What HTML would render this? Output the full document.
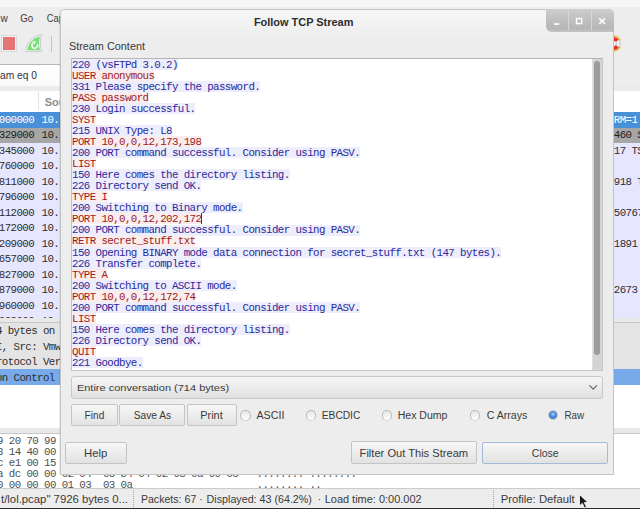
<!DOCTYPE html>
<html><head><meta charset="utf-8"><style>
html,body{margin:0;padding:0;width:640px;height:509px;overflow:hidden;position:relative;background:#ededed}
.mono{position:absolute;font-family:"Liberation Mono",monospace;font-size:10.8px;letter-spacing:-0.600px;line-height:11px;white-space:pre}
</style></head><body>
<div style="position:absolute;left:0;top:0;width:640px;height:7px;background:#f6f6f6"></div>
<div style="position:absolute;left:0;top:7px;width:640px;height:57px;background:#ededed"></div>
<div style="position:absolute;left:1px;top:35px;width:14px;height:15px;border:1px solid #dadada;background:#f2f2f2"></div>
<div style="position:absolute;left:3px;top:37px;width:12px;height:12.5px;background:#e57575"></div>
<svg style="position:absolute;left:22px;top:30px" width="24" height="26" viewBox="0 0 24 26"><path d="M3.6 21.6 C4.4 13.5 9.5 5.8 19.6 4.4 C17.8 10 18 16.5 19.6 21.6 Z" fill="#f0f0f0" stroke="#cdcdcd" stroke-width="1"/><path d="M5.4 20.3 C6.3 13.8 10.6 7.8 18 6.4 C16.6 11 16.6 16 18 20.3 Z" fill="#78de78"/><path d="M11.2 13.2 A2.8 2.8 0 1 0 15.2 14.2" fill="none" stroke="#f6fff6" stroke-width="1.5"/><path d="M10.2 11.2 L13.8 11 L12.6 14.6 Z" fill="#f6fff6"/></svg>
<div style="position:absolute;left:51px;top:36px;width:1px;height:16px;background:#c4c4c4"></div>
<div style="position:absolute;left:-5px;top:64px;width:610px;height:21px;border-top:1px solid #b8b8b8;border-bottom:1px solid #c8c8c8;background:linear-gradient(#fff,#fafafa)"></div>
<div style="position:absolute;left:0;top:86px;width:640px;height:5px;background:#ebebeb"></div>
<div style="position:absolute;left:0;top:91px;width:640px;height:21px;background:#fff"></div>
<div style="position:absolute;left:38px;top:92px;width:1px;height:18px;background:#e4e4e4"></div>
<div style="position:absolute;left:0;top:112.00px;width:640px;height:16.00px;background:#4a90d9"></div>
<div style="position:absolute;left:0;top:127.50px;width:640px;height:16.00px;background:#a6a6a6"></div>
<div style="position:absolute;left:0;top:143.00px;width:640px;height:16.00px;background:#e7e6ff"></div>
<div style="position:absolute;left:0;top:158.50px;width:640px;height:16.00px;background:#e7e6ff"></div>
<div style="position:absolute;left:0;top:174.00px;width:640px;height:16.00px;background:#e7e6ff"></div>
<div style="position:absolute;left:0;top:189.50px;width:640px;height:16.00px;background:#e7e6ff"></div>
<div style="position:absolute;left:0;top:205.00px;width:640px;height:16.00px;background:#e7e6ff"></div>
<div style="position:absolute;left:0;top:220.50px;width:640px;height:16.00px;background:#e7e6ff"></div>
<div style="position:absolute;left:0;top:236.00px;width:640px;height:16.00px;background:#e7e6ff"></div>
<div style="position:absolute;left:0;top:251.50px;width:640px;height:16.00px;background:#e7e6ff"></div>
<div style="position:absolute;left:0;top:267.00px;width:640px;height:16.00px;background:#e7e6ff"></div>
<div style="position:absolute;left:0;top:282.50px;width:640px;height:16.00px;background:#e7e6ff"></div>
<div style="position:absolute;left:0;top:298.00px;width:640px;height:16.00px;background:#e7e6ff"></div>
<div style="position:absolute;left:0;top:313.50px;width:640px;height:16.00px;background:#e7e6ff"></div>
<div style="position:absolute;left:0;top:318px;width:640px;height:4px;background:#e8e8e8;border-bottom:1px solid #c8c8c8"></div>
<div style="position:absolute;left:0;top:323px;width:640px;height:106px;background:#fff"></div>
<div style="position:absolute;left:0;top:322.50px;width:640px;height:15.50px;background:#e4e4e4"></div>
<div style="position:absolute;left:0;top:338.00px;width:640px;height:15.50px;background:#e4e4e4"></div>
<div style="position:absolute;left:0;top:353.50px;width:640px;height:15.50px;background:#e4e4e4"></div>
<div style="position:absolute;left:0;top:369.00px;width:640px;height:15.50px;background:#78aaea"></div>
<div style="position:absolute;left:0;top:428px;width:640px;height:5px;background:#e8e8e8;border-bottom:1px solid #c8c8c8"></div>
<div style="position:absolute;left:0;top:434px;width:640px;height:55px;background:#fff"></div>
<div style="position:absolute;left:0;top:488px;width:640px;height:1px;background:#cbcbcb"></div>
<div style="position:absolute;left:0;top:489px;width:640px;height:20px;background:#ededed"></div>
<div style="position:absolute;left:133px;top:490px;width:0;height:19px;border-left:1px dotted #a8a8a8"></div>
<div style="position:absolute;left:493px;top:490px;width:0;height:19px;border-left:1px dotted #a8a8a8"></div>
<svg style="position:absolute;left:606px;top:34px" width="18" height="19" viewBox="0 0 18 19"><path d="M12.33 5.45 A6.3 6.3 0 0 1 12.33 13.55 L9.95 11.56 A3.2 3.2 0 0 0 9.95 7.44 Z" fill="#f6f6f6" stroke="#a8a8a8" stroke-width="0.7"/><path d="M5.64 2.55 A7.2 7.2 0 0 1 14.03 6.46" fill="none" stroke="#e4c458" stroke-width="2.2"/><path d="M14.03 12.54 A7.2 7.2 0 0 1 5.64 16.45" fill="none" stroke="#e4c458" stroke-width="2.2"/><path d="M6.35 3.00 A6.6 6.6 0 0 1 12.70 5.44 L9.71 7.78 A2.8 2.8 0 0 0 7.01 6.74 Z" fill="#e43030"/><path d="M12.70 13.56 A6.6 6.6 0 0 1 6.35 16.00 L7.01 12.26 A2.8 2.8 0 0 0 9.71 11.22 Z" fill="#e43030"/></svg>
<div style="position:absolute;left:0;top:112px;width:640px;height:206.3px;overflow:hidden"><div class="mono" style="left:-1.2px;top:2.90px;color:#ffffff">000000</div>
<div class="mono" style="left:41.6px;top:2.90px;color:#ffffff">10.</div>
<div class="mono" style="left:613.8px;top:2.90px;color:#ffffff">RM=1</div>
<div class="mono" style="left:-1.2px;top:18.40px;color:#1e1e1e">329000</div>
<div class="mono" style="left:41.6px;top:18.40px;color:#1e1e1e">10.</div>
<div class="mono" style="left:613.8px;top:18.40px;color:#1e1e1e">460 S</div>
<div class="mono" style="left:-1.2px;top:33.90px;color:#2e2e2e">345000</div>
<div class="mono" style="left:41.6px;top:33.90px;color:#2e2e2e">10.</div>
<div class="mono" style="left:613.8px;top:33.90px;color:#2e2e2e">17 TS</div>
<div class="mono" style="left:-1.2px;top:49.40px;color:#2e2e2e">760000</div>
<div class="mono" style="left:41.6px;top:49.40px;color:#2e2e2e">10.</div>
<div class="mono" style="left:613.8px;top:49.40px;color:#2e2e2e"></div>
<div class="mono" style="left:-1.2px;top:64.90px;color:#2e2e2e">811000</div>
<div class="mono" style="left:41.6px;top:64.90px;color:#2e2e2e">10.</div>
<div class="mono" style="left:613.8px;top:64.90px;color:#2e2e2e">918 T</div>
<div class="mono" style="left:-1.2px;top:80.40px;color:#2e2e2e">796000</div>
<div class="mono" style="left:41.6px;top:80.40px;color:#2e2e2e">10.</div>
<div class="mono" style="left:613.8px;top:80.40px;color:#2e2e2e"></div>
<div class="mono" style="left:-1.2px;top:95.90px;color:#2e2e2e">112000</div>
<div class="mono" style="left:41.6px;top:95.90px;color:#2e2e2e">10.</div>
<div class="mono" style="left:613.8px;top:95.90px;color:#2e2e2e">50767</div>
<div class="mono" style="left:-1.2px;top:111.40px;color:#2e2e2e">172000</div>
<div class="mono" style="left:41.6px;top:111.40px;color:#2e2e2e">10.</div>
<div class="mono" style="left:613.8px;top:111.40px;color:#2e2e2e"></div>
<div class="mono" style="left:-1.2px;top:126.90px;color:#2e2e2e">209000</div>
<div class="mono" style="left:41.6px;top:126.90px;color:#2e2e2e">10.</div>
<div class="mono" style="left:613.8px;top:126.90px;color:#2e2e2e">1891</div>
<div class="mono" style="left:-1.2px;top:142.40px;color:#2e2e2e">657000</div>
<div class="mono" style="left:41.6px;top:142.40px;color:#2e2e2e">10.</div>
<div class="mono" style="left:613.8px;top:142.40px;color:#2e2e2e"></div>
<div class="mono" style="left:-1.2px;top:157.90px;color:#2e2e2e">827000</div>
<div class="mono" style="left:41.6px;top:157.90px;color:#2e2e2e">10.</div>
<div class="mono" style="left:613.8px;top:157.90px;color:#2e2e2e"></div>
<div class="mono" style="left:-1.2px;top:173.40px;color:#2e2e2e">879000</div>
<div class="mono" style="left:41.6px;top:173.40px;color:#2e2e2e">10.</div>
<div class="mono" style="left:613.8px;top:173.40px;color:#2e2e2e">2673</div>
<div class="mono" style="left:-1.2px;top:188.90px;color:#2e2e2e">960000</div>
<div class="mono" style="left:41.6px;top:188.90px;color:#2e2e2e">10.</div>
<div class="mono" style="left:613.8px;top:188.90px;color:#2e2e2e"></div>
<div class="mono" style="left:-1.2px;top:204.40px;color:#2e2e2e">038000</div>
<div class="mono" style="left:41.6px;top:204.40px;color:#2e2e2e">10.</div>
<div class="mono" style="left:613.8px;top:204.40px;color:#2e2e2e"></div></div>
<div style="position:absolute;left:0;top:322px;width:640px;height:106px;overflow:hidden"><div class="mono" style="left:-62.9px;top:4.00px;color:#2e2e2e">Frame 1: 74 bytes on wire</div>
<div class="mono" style="left:-62.9px;top:19.50px;color:#2e2e2e">Ethernet II, Src: Vmware</div>
<div class="mono" style="left:-62.9px;top:35.00px;color:#2e2e2e">Internet Protocol Version 4</div>
<div class="mono" style="left:-62.9px;top:50.50px;color:#2e2e2e">Transmission Control Protocol</div></div>
<div style="position:absolute;left:0;top:434px;width:640px;height:54px;overflow:hidden"><div class="mono" style="left:-8.84px;top:1.60px;color:#505050">09</div>
<div class="mono" style="left:8.80px;top:1.60px;color:#505050">20</div>
<div class="mono" style="left:26.44px;top:1.60px;color:#505050">70</div>
<div class="mono" style="left:44.08px;top:1.60px;color:#505050">99</div>
<div class="mono" style="left:61.72px;top:1.60px;color:#505050">00</div>
<div class="mono" style="left:79.36px;top:1.60px;color:#505050">50</div>
<div class="mono" style="left:102.90px;top:1.60px;color:#505050">56</div>
<div class="mono" style="left:120.54px;top:1.60px;color:#505050">c0</div>
<div class="mono" style="left:138.18px;top:1.60px;color:#505050">00</div>
<div class="mono" style="left:155.82px;top:1.60px;color:#505050">08</div>
<div class="mono" style="left:173.46px;top:1.60px;color:#505050">08</div>
<div class="mono" style="left:191.10px;top:1.60px;color:#505050">00</div>
<div class="mono" style="left:208.74px;top:1.60px;color:#505050">45</div>
<div class="mono" style="left:226.38px;top:1.60px;color:#505050">00</div>
<div class="mono" style="left:256.5px;top:1.60px;color:#505050">........ ........</div>
<div class="mono" style="left:-8.84px;top:12.60px;color:#505050">08</div>
<div class="mono" style="left:8.80px;top:12.60px;color:#505050">14</div>
<div class="mono" style="left:26.44px;top:12.60px;color:#505050">40</div>
<div class="mono" style="left:44.08px;top:12.60px;color:#505050">00</div>
<div class="mono" style="left:61.72px;top:12.60px;color:#505050">40</div>
<div class="mono" style="left:79.36px;top:12.60px;color:#505050">06</div>
<div class="mono" style="left:102.90px;top:12.60px;color:#505050">b5</div>
<div class="mono" style="left:120.54px;top:12.60px;color:#505050">3a</div>
<div class="mono" style="left:138.18px;top:12.60px;color:#505050">0a</div>
<div class="mono" style="left:155.82px;top:12.60px;color:#505050">00</div>
<div class="mono" style="left:173.46px;top:12.60px;color:#505050">00</div>
<div class="mono" style="left:191.10px;top:12.60px;color:#505050">0c</div>
<div class="mono" style="left:208.74px;top:12.60px;color:#505050">0a</div>
<div class="mono" style="left:226.38px;top:12.60px;color:#505050">00</div>
<div class="mono" style="left:256.5px;top:12.60px;color:#505050">........ ........</div>
<div class="mono" style="left:-8.84px;top:23.60px;color:#505050">0c</div>
<div class="mono" style="left:8.80px;top:23.60px;color:#505050">e1</div>
<div class="mono" style="left:26.44px;top:23.60px;color:#505050">00</div>
<div class="mono" style="left:44.08px;top:23.60px;color:#505050">15</div>
<div class="mono" style="left:61.72px;top:23.60px;color:#505050">d2</div>
<div class="mono" style="left:79.36px;top:23.60px;color:#505050">4a</div>
<div class="mono" style="left:102.90px;top:23.60px;color:#505050">9f</div>
<div class="mono" style="left:120.54px;top:23.60px;color:#505050">6b</div>
<div class="mono" style="left:138.18px;top:23.60px;color:#505050">00</div>
<div class="mono" style="left:155.82px;top:23.60px;color:#505050">00</div>
<div class="mono" style="left:173.46px;top:23.60px;color:#505050">00</div>
<div class="mono" style="left:191.10px;top:23.60px;color:#505050">00</div>
<div class="mono" style="left:208.74px;top:23.60px;color:#505050">a0</div>
<div class="mono" style="left:226.38px;top:23.60px;color:#505050">02</div>
<div class="mono" style="left:256.5px;top:23.60px;color:#505050">........ ........</div>
<div class="mono" style="left:-8.84px;top:34.60px;color:#505050">0a</div>
<div class="mono" style="left:8.80px;top:34.60px;color:#505050">dc</div>
<div class="mono" style="left:26.44px;top:34.60px;color:#505050">00</div>
<div class="mono" style="left:44.08px;top:34.60px;color:#505050">00</div>
<div class="mono" style="left:61.72px;top:34.60px;color:#505050">02</div>
<div class="mono" style="left:79.36px;top:34.60px;color:#505050">04</div>
<div class="mono" style="left:102.90px;top:34.60px;color:#505050">05</div>
<div class="mono" style="left:120.54px;top:34.60px;color:#505050">b4</div>
<div class="mono" style="left:138.18px;top:34.60px;color:#505050">04</div>
<div class="mono" style="left:155.82px;top:34.60px;color:#505050">02</div>
<div class="mono" style="left:173.46px;top:34.60px;color:#505050">08</div>
<div class="mono" style="left:191.10px;top:34.60px;color:#505050">0a</div>
<div class="mono" style="left:208.74px;top:34.60px;color:#505050">00</div>
<div class="mono" style="left:226.38px;top:34.60px;color:#505050">03</div>
<div class="mono" style="left:256.5px;top:34.60px;color:#505050">........ ........</div>
<div class="mono" style="left:-8.84px;top:45.60px;color:#505050">00</div>
<div class="mono" style="left:8.80px;top:45.60px;color:#505050">00</div>
<div class="mono" style="left:26.44px;top:45.60px;color:#505050">00</div>
<div class="mono" style="left:44.08px;top:45.60px;color:#505050">00</div>
<div class="mono" style="left:61.72px;top:45.60px;color:#505050">01</div>
<div class="mono" style="left:79.36px;top:45.60px;color:#505050">03</div>
<div class="mono" style="left:102.90px;top:45.60px;color:#505050">03</div>
<div class="mono" style="left:120.54px;top:45.60px;color:#505050">0a</div>
<div class="mono" style="left:256.5px;top:45.60px;color:#505050">........ ..</div></div>
<svg style="position:absolute;left:0;top:0" width="640" height="509" font-family="Liberation Sans, sans-serif"><text id="menu_w" x="0.50" y="21.80" font-size="10" font-weight="normal" fill="#3a3a3a" textLength="7.30" lengthAdjust="spacingAndGlyphs">w</text><text id="menu_go" x="20.30" y="21.80" font-size="10" font-weight="normal" fill="#3a3a3a" textLength="12.90" lengthAdjust="spacingAndGlyphs">Go</text><text id="menu_cap" x="46.80" y="21.80" font-size="10" font-weight="normal" fill="#3a3a3a" textLength="17.20" lengthAdjust="spacingAndGlyphs">Cap</text><text id="filter" x="0.00" y="79.20" font-size="10.2" font-weight="normal" fill="#333333" textLength="37.00" lengthAdjust="spacingAndGlyphs">am eq 0</text><text id="hdr_so" x="44.70" y="106.00" font-size="11" font-weight="bold" fill="#8c8c8c">Sou</text><text id="st1" x="1.00" y="502.70" font-size="10" font-weight="normal" fill="#3a3a3a" textLength="127.00" lengthAdjust="spacingAndGlyphs">t/lol.pcap" 7926 bytes 0...</text><text id="st2" x="140.90" y="502.70" font-size="10" font-weight="normal" fill="#3a3a3a" textLength="55.40" lengthAdjust="spacingAndGlyphs">Packets: 67</text><text id="st3" x="199.30" y="502.70" font-size="10" font-weight="normal" fill="#3a3a3a">·</text><text id="st4" x="206.60" y="502.70" font-size="10" font-weight="normal" fill="#3a3a3a" textLength="105.30" lengthAdjust="spacingAndGlyphs">Displayed: 43 (64.2%)</text><text id="st5" x="317.70" y="502.70" font-size="10" font-weight="normal" fill="#3a3a3a">·</text><text id="st6" x="324.70" y="502.70" font-size="10" font-weight="normal" fill="#3a3a3a" textLength="96.90" lengthAdjust="spacingAndGlyphs">Load time: 0:00.002</text><text id="st7" x="500.70" y="502.70" font-size="10" font-weight="normal" fill="#3a3a3a" textLength="73.90" lengthAdjust="spacingAndGlyphs">Profile: Default</text></svg>
<div style="position:absolute;left:60px;top:9px;width:552px;height:463.5px;border:1px solid #c4c4c4;border-radius:5px 5px 0 0;background:#ededed;box-shadow:-1px 0 0 rgba(0,0,0,0.07)"></div>
<div style="position:absolute;left:61px;top:10px;width:552px;height:30px;border-radius:4px 4px 0 0;background:linear-gradient(#f6f6f6,#ededed)"></div>
<div style="position:absolute;left:545.5px;top:9px;width:68px;height:22.5px;border-radius:0 5px 0 6px;background:linear-gradient(#cdcdcd,#b6b6b6 85%,#c4c4c4)"></div>
<div style="position:absolute;left:567.5px;top:10px;width:1px;height:20px;background:#d6d6d6"></div>
<div style="position:absolute;left:590.5px;top:10px;width:1px;height:20px;background:#d6d6d6"></div>
<svg style="position:absolute;left:545px;top:9px" width="70" height="24" viewBox="0 0 70 24"><rect x="9" y="14.2" width="5.2" height="1.7" fill="#fff"/><rect x="31.5" y="9.6" width="5.2" height="5" fill="none" stroke="#fff" stroke-width="1.4"/><path d="M54.2 9.4 L60 15 M60 9.4 L54.2 15" stroke="#fff" stroke-width="1.5"/></svg>
<div style="position:absolute;left:71px;top:58px;width:530px;height:311px;border:1px solid #b4b4b4;border-left-color:#c0c0c0;border-right-color:#c8c8c8;border-bottom-color:#c8c8c8;background:#fff"></div>
<div style="position:absolute;left:72px;top:59.0px;height:11px;width:105.84px;background:#ededfb"></div>
<div class="mono" style="left:72px;top:59.90px;color:#2a2a9c">220 (vsFTPd 3.0.2)</div>
<div style="position:absolute;left:72px;top:70.035px;height:11px;width:82.32px;background:#fbeded"></div>
<div class="mono" style="left:72px;top:70.94px;color:#9c1a1a">USER anonymous</div>
<div style="position:absolute;left:72px;top:81.07px;height:11px;width:188.16px;background:#ededfb"></div>
<div class="mono" style="left:72px;top:81.97px;color:#2a2a9c">331 Please specify the password.</div>
<div style="position:absolute;left:72px;top:92.105px;height:11px;width:76.44px;background:#fbeded"></div>
<div class="mono" style="left:72px;top:93.01px;color:#9c1a1a">PASS password</div>
<div style="position:absolute;left:72px;top:103.14px;height:11px;width:123.48px;background:#ededfb"></div>
<div class="mono" style="left:72px;top:104.04px;color:#2a2a9c">230 Login successful.</div>
<div style="position:absolute;left:72px;top:114.175px;height:11px;width:23.52px;background:#fbeded"></div>
<div class="mono" style="left:72px;top:115.08px;color:#9c1a1a">SYST</div>
<div style="position:absolute;left:72px;top:125.21000000000001px;height:11px;width:99.96px;background:#ededfb"></div>
<div class="mono" style="left:72px;top:126.11px;color:#2a2a9c">215 UNIX Type: L8</div>
<div style="position:absolute;left:72px;top:136.245px;height:11px;width:129.36px;background:#fbeded"></div>
<div class="mono" style="left:72px;top:137.15px;color:#9c1a1a">PORT 10,0,0,12,173,198</div>
<div style="position:absolute;left:72px;top:147.28px;height:11px;width:288.12px;background:#ededfb"></div>
<div class="mono" style="left:72px;top:148.18px;color:#2a2a9c">200 PORT command successful. Consider using PASV.</div>
<div style="position:absolute;left:72px;top:158.315px;height:11px;width:23.52px;background:#fbeded"></div>
<div class="mono" style="left:72px;top:159.22px;color:#9c1a1a">LIST</div>
<div style="position:absolute;left:72px;top:169.35px;height:11px;width:217.56px;background:#ededfb"></div>
<div class="mono" style="left:72px;top:170.25px;color:#2a2a9c">150 Here comes the directory listing.</div>
<div style="position:absolute;left:72px;top:180.385px;height:11px;width:129.36px;background:#ededfb"></div>
<div class="mono" style="left:72px;top:181.28px;color:#2a2a9c">226 Directory send OK.</div>
<div style="position:absolute;left:72px;top:191.42000000000002px;height:11px;width:35.28px;background:#fbeded"></div>
<div class="mono" style="left:72px;top:192.32px;color:#9c1a1a">TYPE I</div>
<div style="position:absolute;left:72px;top:202.455px;height:11px;width:170.52px;background:#ededfb"></div>
<div class="mono" style="left:72px;top:203.36px;color:#2a2a9c">200 Switching to Binary mode.</div>
<div style="position:absolute;left:72px;top:213.49px;height:11px;width:129.36px;background:#fbeded"></div>
<div class="mono" style="left:72px;top:214.39px;color:#9c1a1a">PORT 10,0,0,12,202,172</div>
<div style="position:absolute;left:72px;top:224.525px;height:11px;width:288.12px;background:#ededfb"></div>
<div class="mono" style="left:72px;top:225.43px;color:#2a2a9c">200 PORT command successful. Consider using PASV.</div>
<div style="position:absolute;left:72px;top:235.56px;height:11px;width:123.48px;background:#fbeded"></div>
<div class="mono" style="left:72px;top:236.46px;color:#9c1a1a">RETR secret_stuff.txt</div>
<div style="position:absolute;left:72px;top:246.595px;height:11px;width:429.24px;background:#ededfb"></div>
<div class="mono" style="left:72px;top:247.50px;color:#2a2a9c">150 Opening BINARY mode data connection for secret_stuff.txt (147 bytes).</div>
<div style="position:absolute;left:72px;top:257.63px;height:11px;width:129.36px;background:#ededfb"></div>
<div class="mono" style="left:72px;top:258.53px;color:#2a2a9c">226 Transfer complete.</div>
<div style="position:absolute;left:72px;top:268.66499999999996px;height:11px;width:35.28px;background:#fbeded"></div>
<div class="mono" style="left:72px;top:269.56px;color:#9c1a1a">TYPE A</div>
<div style="position:absolute;left:72px;top:279.7px;height:11px;width:164.64px;background:#ededfb"></div>
<div class="mono" style="left:72px;top:280.60px;color:#2a2a9c">200 Switching to ASCII mode.</div>
<div style="position:absolute;left:72px;top:290.735px;height:11px;width:123.48px;background:#fbeded"></div>
<div class="mono" style="left:72px;top:291.63px;color:#9c1a1a">PORT 10,0,0,12,172,74</div>
<div style="position:absolute;left:72px;top:301.77px;height:11px;width:288.12px;background:#ededfb"></div>
<div class="mono" style="left:72px;top:302.67px;color:#2a2a9c">200 PORT command successful. Consider using PASV.</div>
<div style="position:absolute;left:72px;top:312.805px;height:11px;width:23.52px;background:#fbeded"></div>
<div class="mono" style="left:72px;top:313.70px;color:#9c1a1a">LIST</div>
<div style="position:absolute;left:72px;top:323.84000000000003px;height:11px;width:217.56px;background:#ededfb"></div>
<div class="mono" style="left:72px;top:324.74px;color:#2a2a9c">150 Here comes the directory listing.</div>
<div style="position:absolute;left:72px;top:334.875px;height:11px;width:129.36px;background:#ededfb"></div>
<div class="mono" style="left:72px;top:335.77px;color:#2a2a9c">226 Directory send OK.</div>
<div style="position:absolute;left:72px;top:345.91px;height:11px;width:23.52px;background:#fbeded"></div>
<div class="mono" style="left:72px;top:346.81px;color:#9c1a1a">QUIT</div>
<div style="position:absolute;left:72px;top:356.945px;height:11px;width:70.56px;background:#ededfb"></div>
<div class="mono" style="left:72px;top:357.84px;color:#2a2a9c">221 Goodbye.</div>
<div style="position:absolute;left:201px;top:213.2px;width:1px;height:11px;background:#3a3a3a"></div>
<div style="position:absolute;left:592px;top:59px;width:9px;height:311px;background:#d4d4d4;border-left:1px solid #dedede"></div>
<div style="position:absolute;left:594px;top:61px;width:5.5px;height:294px;border-radius:3px;background:#9c9c9c"></div>
<div style="position:absolute;left:71px;top:376px;width:530px;height:21px;border:1px solid #c8c8c8;border-radius:3px;background:linear-gradient(#f6f6f6,#e0e0e0)"></div>
<svg style="position:absolute;left:586px;top:383px" width="14" height="9" viewBox="0 0 14 9"><path d="M3.5 2.4L7.2 6.1L10.9 2.4" fill="none" stroke="#6a6a6a" stroke-width="1.3"/></svg>
<div style="position:absolute;left:70.8px;top:404.1px;width:45.40px;height:20.40px;border:1px solid #c4c4c4;border-radius:2px;background:linear-gradient(#f7f7f7,#e2e2e2)"></div>
<div style="position:absolute;left:119.3px;top:404.1px;width:63.80px;height:20.40px;border:1px solid #c4c4c4;border-radius:2px;background:linear-gradient(#f7f7f7,#e2e2e2)"></div>
<div style="position:absolute;left:186.6px;top:404.1px;width:48.00px;height:20.40px;border:1px solid #c4c4c4;border-radius:2px;background:linear-gradient(#f7f7f7,#e2e2e2)"></div>
<div style="position:absolute;left:240.2px;top:410px;width:8.5px;height:8.5px;border-radius:50%;border:1px solid #bababa;border-bottom-color:#d4d4d4;background:linear-gradient(#e6e6e6,#fdfdfd)"></div>
<div style="position:absolute;left:305.7px;top:410px;width:8.5px;height:8.5px;border-radius:50%;border:1px solid #bababa;border-bottom-color:#d4d4d4;background:linear-gradient(#e6e6e6,#fdfdfd)"></div>
<div style="position:absolute;left:381.5px;top:410px;width:8.5px;height:8.5px;border-radius:50%;border:1px solid #bababa;border-bottom-color:#d4d4d4;background:linear-gradient(#e6e6e6,#fdfdfd)"></div>
<div style="position:absolute;left:469.5px;top:410px;width:8.5px;height:8.5px;border-radius:50%;border:1px solid #bababa;border-bottom-color:#d4d4d4;background:linear-gradient(#e6e6e6,#fdfdfd)"></div>
<div style="position:absolute;left:547.9px;top:410.2px;width:8px;height:8px;border-radius:50%;border:1px solid #c4c8cc;background:radial-gradient(circle at 50% 40%,#8cbcf0 0 1px,#4f8fdc 2.5px,#3d7fd0 4px)"></div>
<div style="position:absolute;left:65.25px;top:441.5px;width:60.00px;height:20.20px;border:1px solid #c4c4c4;border-radius:2px;background:linear-gradient(#f7f7f7,#e2e2e2)"></div>
<div style="position:absolute;left:350.8px;top:441.3px;width:124.00px;height:20.50px;border:1px solid #c4c4c4;border-radius:2px;background:linear-gradient(#f7f7f7,#e2e2e2)"></div>
<div style="position:absolute;left:481.9px;top:441.5px;width:124.50px;height:20.30px;border:1px solid #a4bcdc;border-radius:2px;background:linear-gradient(#f7f7f7,#e2e2e2)"></div>
<svg style="position:absolute;left:0;top:0" width="640" height="509" font-family="Liberation Sans, sans-serif"><text id="title" x="253.90" y="25.50" font-size="10.4" font-weight="bold" fill="#2e2e2e" textLength="99.50" lengthAdjust="spacingAndGlyphs">Follow TCP Stream</text><text id="stream" x="68.90" y="49.70" font-size="10.4" font-weight="normal" fill="#3a3a3a" textLength="76.10" lengthAdjust="spacingAndGlyphs">Stream Content</text><text id="combo" x="76.90" y="391.00" font-size="9.4" font-weight="normal" fill="#3a3a3a" textLength="152.20" lengthAdjust="spacingAndGlyphs">Entire conversation (714 bytes)</text><text id="find" x="84.60" y="419.10" font-size="10" font-weight="normal" fill="#3a3a3a" textLength="19.70" lengthAdjust="spacingAndGlyphs">Find</text><text id="saveas" x="133.80" y="419.10" font-size="10" font-weight="normal" fill="#3a3a3a" textLength="37.40" lengthAdjust="spacingAndGlyphs">Save As</text><text id="print" x="200.20" y="419.10" font-size="10" font-weight="normal" fill="#3a3a3a" textLength="22.50" lengthAdjust="spacingAndGlyphs">Print</text><text id="ascii" x="256.50" y="419.10" font-size="10" font-weight="normal" fill="#3a3a3a" textLength="27.90" lengthAdjust="spacingAndGlyphs">ASCII</text><text id="ebcdic" x="321.80" y="419.10" font-size="10" font-weight="normal" fill="#3a3a3a" textLength="38.50" lengthAdjust="spacingAndGlyphs">EBCDIC</text><text id="hexd" x="397.70" y="419.10" font-size="10" font-weight="normal" fill="#3a3a3a" textLength="49.80" lengthAdjust="spacingAndGlyphs">Hex Dump</text><text id="carr" x="486.70" y="419.10" font-size="10" font-weight="normal" fill="#3a3a3a" textLength="40.60" lengthAdjust="spacingAndGlyphs">C Arrays</text><text id="raw" x="564.40" y="419.10" font-size="10" font-weight="normal" fill="#3a3a3a" textLength="19.60" lengthAdjust="spacingAndGlyphs">Raw</text><text id="help" x="84.00" y="456.80" font-size="10.4" font-weight="normal" fill="#3a3a3a" textLength="23.25" lengthAdjust="spacingAndGlyphs">Help</text><text id="filt" x="359.60" y="456.80" font-size="10.4" font-weight="normal" fill="#3a3a3a" textLength="108.50" lengthAdjust="spacingAndGlyphs">Filter Out This Stream</text><text id="close" x="531.80" y="456.80" font-size="10.4" font-weight="normal" fill="#3a3a3a" textLength="26.90" lengthAdjust="spacingAndGlyphs">Close</text></svg>
<div style="position:absolute;left:0;top:508px;width:640px;height:1px;background:#2e2e2e"></div>
<svg style="position:absolute;left:578px;top:493.3px" width="12" height="16" viewBox="0 0 12 16"><path d="M1.5 1.5 L1.5 13 L4.3 10.3 L6.5 15 L8.5 14 L6.3 9.5 L10 9.5 Z" fill="#1a1a1a" stroke="#fff" stroke-width="0.8"/></svg>
</body></html>
